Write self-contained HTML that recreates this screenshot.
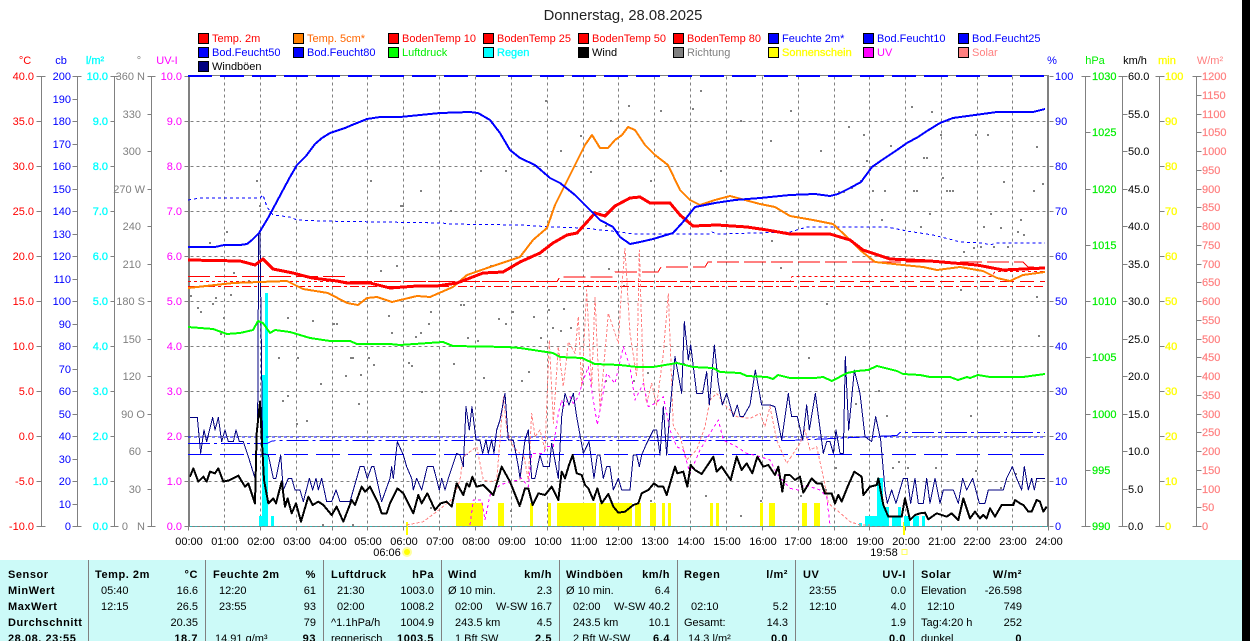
<!DOCTYPE html>
<html lang="de"><head><meta charset="utf-8"><title>Donnerstag, 28.08.2025</title>
<style>
html,body{margin:0;padding:0;background:#fff;overflow:hidden}
svg{display:block;font-family:"Liberation Sans",sans-serif;font-size:11px}
.b{font-weight:bold;letter-spacing:.55px}
.e{text-anchor:end}
.m{text-anchor:middle}
polyline,.ln{fill:none;shape-rendering:crispEdges;stroke-linejoin:round}
.nz{vector-effect:non-scaling-stroke}
</style></head><body>
<svg width="1250" height="641" viewBox="0 0 1250 641" xmlns="http://www.w3.org/2000/svg">
<rect width="1250" height="641" fill="#fff"/>
<rect x="1242" y="0" width="8" height="641" fill="#000"/>

<text x="623" y="20" class="m" font-size="14.8" fill="#222">Donnerstag, 28.08.2025</text>

<!-- legend -->
<g stroke="#000" stroke-width="1" shape-rendering="crispEdges">
<rect x="198.5" y="33.5" width="10" height="10" fill="#f00"/><rect x="293.5" y="33.5" width="10" height="10" fill="#ff8000"/><rect x="388.5" y="33.5" width="10" height="10" fill="#f00"/><rect x="483.5" y="33.5" width="10" height="10" fill="#f00"/><rect x="578.5" y="33.5" width="10" height="10" fill="#f00"/><rect x="673.5" y="33.5" width="10" height="10" fill="#f00"/><rect x="768.5" y="33.5" width="10" height="10" fill="#00f"/><rect x="863.5" y="33.5" width="10" height="10" fill="#00f"/><rect x="958.5" y="33.5" width="10" height="10" fill="#00f"/>
<rect x="198.5" y="47.5" width="10" height="10" fill="#00f"/><rect x="293.5" y="47.5" width="10" height="10" fill="#00f"/><rect x="388.5" y="47.5" width="10" height="10" fill="#0f0"/><rect x="483.5" y="47.5" width="10" height="10" fill="#0ff"/><rect x="578.5" y="47.5" width="10" height="10" fill="#000"/><rect x="673.5" y="47.5" width="10" height="10" fill="#808080"/><rect x="768.5" y="47.5" width="10" height="10" fill="#ff0"/><rect x="863.5" y="47.5" width="10" height="10" fill="#f0f"/><rect x="958.5" y="47.5" width="10" height="10" fill="#ff8080"/>
<rect x="198.5" y="61.5" width="10" height="10" fill="#000080"/>
</g>
<g>
<text x="212" y="42" fill="#f00">Temp. 2m</text><text x="307" y="42" fill="#f60">Temp. 5cm*</text><text x="402" y="42" fill="#f00">BodenTemp 10</text><text x="497" y="42" fill="#f00">BodenTemp 25</text><text x="592" y="42" fill="#f00">BodenTemp 50</text><text x="687" y="42" fill="#f00">BodenTemp 80</text><text x="782" y="42" fill="#00f">Feuchte 2m*</text><text x="877" y="42" fill="#00f">Bod.Feucht10</text><text x="972" y="42" fill="#00f">Bod.Feucht25</text>
<text x="212" y="56" fill="#00f">Bod.Feucht50</text><text x="307" y="56" fill="#00f">Bod.Feucht80</text><text x="402" y="56" fill="#0e0">Luftdruck</text><text x="497" y="56" fill="#0ff" stroke="#0ff" stroke-width=".3">Regen</text><text x="592" y="56" fill="#000">Wind</text><text x="687" y="56" fill="#808080">Richtung</text><text x="782" y="56" fill="#ff0" stroke="#ff0" stroke-width=".3">Sonnenschein</text><text x="877" y="56" fill="#f0f">UV</text><text x="972" y="56" fill="#ff8080">Solar</text>
<text x="212" y="70" fill="#000">Windböen</text>
</g>

<!-- axis headings -->
<text x="25" y="64" class="m" fill="#f00">°C</text><text x="61" y="64" class="m" fill="#00f">cb</text><text x="95" y="64" class="m" fill="#0ff" stroke="#0ff" stroke-width=".3">l/m²</text><text x="139" y="64" class="m" fill="#808080">°</text><text x="167" y="64" class="m" fill="#f0f">UV-I</text>
<text x="1052" y="64" class="m" fill="#00f">%</text><text x="1095" y="64" class="m" fill="#0e0">hPa</text><text x="1135" y="64" class="m" fill="#000">km/h</text><text x="1167" y="64" class="m" fill="#ff0" stroke="#ff0" stroke-width=".3">min</text><text x="1210" y="64" class="m" fill="#ff8080">W/m²</text>

<!-- axes -->
<g transform="translate(.5,.5)" stroke="#808080" fill="none" shape-rendering="crispEdges">
<path d="M41 76V526M36 76h9M36 121h5M36 166h5M36 211h5M36 256h5M36 301h5M36 346h5M36 391h5M36 436h5M36 481h5M36 526h9"/>
<path d="M77 76V526M72 76h9M72 99h5M72 121h5M72 144h5M72 166h5M72 189h5M72 211h5M72 234h5M72 256h5M72 279h5M72 301h5M72 324h5M72 346h5M72 369h5M72 391h5M72 414h5M72 436h5M72 459h5M72 481h5M72 504h5M72 526h9"/>
<path d="M114 76V526M110 76h8M110 121h4M110 166h4M110 211h4M110 256h4M110 301h4M110 346h4M110 391h4M110 436h4M110 481h4M110 526h8"/>
<path d="M151 76V526M147 76h8M147 114h4M147 151h4M147 189h4M147 226h4M147 264h4M147 301h4M147 339h4M147 376h4M147 414h4M147 451h4M147 489h4M147 526h8"/>
<path d="M184 76h4M184 121h4M184 166h4M184 211h4M184 256h4M184 301h4M184 346h4M184 391h4M184 436h4M184 481h4M184 526h4"/>
<path d="M1049 76h4M1049 121h4M1049 166h4M1049 211h4M1049 256h4M1049 301h4M1049 346h4M1049 391h4M1049 436h4M1049 481h4M1049 526h4"/>
<path d="M1085 76V526M1081 76h9M1085 132h5M1085 189h5M1085 245h5M1085 301h5M1085 357h5M1085 414h5M1085 470h5M1081 526h9"/>
<path d="M1122 76V526M1118 76h9M1122 114h5M1122 151h5M1122 189h5M1122 226h5M1122 264h5M1122 301h5M1122 339h5M1122 376h5M1122 414h5M1122 451h5M1122 489h5M1118 526h9"/>
<path d="M1159 76V526M1155 76h9M1159 121h5M1159 166h5M1159 211h5M1159 256h5M1159 301h5M1159 346h5M1159 391h5M1159 436h5M1159 481h5M1155 526h9"/>
<path d="M1196 76V526M1192 76h9M1196 95h5M1196 114h5M1196 132h5M1196 151h5M1196 170h5M1196 189h5M1196 207h5M1196 226h5M1196 245h5M1196 264h5M1196 282h5M1196 301h5M1196 320h5M1196 339h5M1196 357h5M1196 376h5M1196 395h5M1196 414h5M1196 432h5M1196 451h5M1196 470h5M1196 489h5M1196 507h5M1192 526h9"/>
</g>

<!-- axis labels -->
<g class="e" fill="#f00" text-anchor="end"><text x="34" y="80">40.0</text><text x="34" y="125">35.0</text><text x="34" y="170">30.0</text><text x="34" y="215">25.0</text><text x="34" y="260">20.0</text><text x="34" y="305">15.0</text><text x="34" y="350">10.0</text><text x="34" y="395">5.0</text><text x="34" y="440">0.0</text><text x="34" y="485">-5.0</text><text x="34" y="530">-10.0</text></g>
<g fill="#00f" text-anchor="end"><text x="71" y="80">200</text><text x="71" y="103">190</text><text x="71" y="125">180</text><text x="71" y="148">170</text><text x="71" y="170">160</text><text x="71" y="193">150</text><text x="71" y="215">140</text><text x="71" y="238">130</text><text x="71" y="260">120</text><text x="71" y="283">110</text><text x="71" y="305">100</text><text x="71" y="328">90</text><text x="71" y="350">80</text><text x="71" y="373">70</text><text x="71" y="395">60</text><text x="71" y="418">50</text><text x="71" y="440">40</text><text x="71" y="463">30</text><text x="71" y="485">20</text><text x="71" y="508">10</text><text x="71" y="530">0</text></g>
<g fill="#0ff" stroke="#0ff" stroke-width=".3" text-anchor="end"><text x="108" y="80">10.0</text><text x="108" y="125">9.0</text><text x="108" y="170">8.0</text><text x="108" y="215">7.0</text><text x="108" y="260">6.0</text><text x="108" y="305">5.0</text><text x="108" y="350">4.0</text><text x="108" y="395">3.0</text><text x="108" y="440">2.0</text><text x="108" y="485">1.0</text><text x="108" y="530">0.0</text></g>
<g fill="#808080" text-anchor="end"><text x="145" y="80">360 N</text><text x="141" y="118">330</text><text x="141" y="155">300</text><text x="145" y="193">270 W</text><text x="141" y="230">240</text><text x="141" y="268">210</text><text x="145" y="305">180 S</text><text x="141" y="343">150</text><text x="141" y="380">120</text><text x="145" y="418">90 O</text><text x="141" y="455">60</text><text x="141" y="493">30</text><text x="128" y="530">0</text><text x="145" y="530">N</text></g>
<g fill="#f0f" text-anchor="end"><text x="182" y="80">10.0</text><text x="182" y="125">9.0</text><text x="182" y="170">8.0</text><text x="182" y="215">7.0</text><text x="182" y="260">6.0</text><text x="182" y="305">5.0</text><text x="182" y="350">4.0</text><text x="182" y="395">3.0</text><text x="182" y="440">2.0</text><text x="182" y="485">1.0</text><text x="182" y="530">0.0</text></g>
<g fill="#00f"><text x="1055" y="80">100</text><text x="1055" y="125">90</text><text x="1055" y="170">80</text><text x="1055" y="215">70</text><text x="1055" y="260">60</text><text x="1055" y="305">50</text><text x="1055" y="350">40</text><text x="1055" y="395">30</text><text x="1055" y="440">20</text><text x="1055" y="485">10</text><text x="1055" y="530">0</text></g>
<g fill="#0e0" stroke="#0e0" stroke-width=".2"><text x="1092" y="80">1030</text><text x="1092" y="136">1025</text><text x="1092" y="193">1020</text><text x="1092" y="249">1015</text><text x="1092" y="305">1010</text><text x="1092" y="361">1005</text><text x="1092" y="418">1000</text><text x="1092" y="474">995</text><text x="1092" y="530">990</text></g>
<g fill="#000"><text x="1128" y="80">60.0</text><text x="1128" y="118">55.0</text><text x="1128" y="155">50.0</text><text x="1128" y="193">45.0</text><text x="1128" y="230">40.0</text><text x="1128" y="268">35.0</text><text x="1128" y="305">30.0</text><text x="1128" y="343">25.0</text><text x="1128" y="380">20.0</text><text x="1128" y="418">15.0</text><text x="1128" y="455">10.0</text><text x="1128" y="493">5.0</text><text x="1128" y="530">0.0</text></g>
<g fill="#ff0" stroke="#ff0" stroke-width=".3"><text x="1165" y="80">100</text><text x="1165" y="125">90</text><text x="1165" y="170">80</text><text x="1165" y="215">70</text><text x="1165" y="260">60</text><text x="1165" y="305">50</text><text x="1165" y="350">40</text><text x="1165" y="395">30</text><text x="1165" y="440">20</text><text x="1165" y="485">10</text><text x="1165" y="530">0</text></g>
<g fill="#ff8080" stroke="#ff8080" stroke-width=".2"><text x="1202" y="80">1200</text><text x="1202" y="99">1150</text><text x="1202" y="118">1100</text><text x="1202" y="136">1050</text><text x="1202" y="155">1000</text><text x="1202" y="174">950</text><text x="1202" y="193">900</text><text x="1202" y="211">850</text><text x="1202" y="230">800</text><text x="1202" y="249">750</text><text x="1202" y="268">700</text><text x="1202" y="286">650</text><text x="1202" y="305">600</text><text x="1202" y="324">550</text><text x="1202" y="343">500</text><text x="1202" y="361">450</text><text x="1202" y="380">400</text><text x="1202" y="399">350</text><text x="1202" y="418">300</text><text x="1202" y="436">250</text><text x="1202" y="455">200</text><text x="1202" y="474">150</text><text x="1202" y="493">100</text><text x="1202" y="511">50</text><text x="1202" y="530">0</text></g>

<!-- grid -->
<g transform="translate(.5,.5)" stroke="#808080" fill="none" shape-rendering="crispEdges">
<path stroke-dasharray="3 3" d="M190 121H1047M190 166H1047M190 211H1047M190 256H1047M190 301H1047M190 346H1047M190 391H1047M190 436H1047M190 481H1047"/>
<path stroke-dasharray="3 3" d="M224 76V526M260 76V526M296 76V526M332 76V526M367 76V526M403 76V526M439 76V526M475 76V526M511 76V526M547 76V526M583 76V526M618 76V526M654 76V526M690 76V526M726 76V526M762 76V526M798 76V526M834 76V526M869 76V526M905 76V526M941 76V526M977 76V526M1012 76V526"/>
<path d="M188 75H1048M188 526H1048"/>
<path d="M188 526v4M224 526v4M260 526v4M296 526v4M332 526v4M367 526v4M403 526v4M439 526v4M475 526v4M511 526v4M547 526v4M583 526v4M618 526v4M654 526v4M690 526v4M726 526v4M762 526v4M798 526v4M834 526v4M869 526v4M905 526v4M941 526v4M977 526v4M1012 526v4M1048 526v4"/>
</g>
<rect x="188" y="75" width="2" height="452" fill="#808080"/>
<rect x="1047" y="75" width="2" height="452" fill="#808080"/>

<!-- scatter (Richtung) -->
<g fill="#808080" shape-rendering="crispEdges">
<path d="M226 231h2v2h-2zM209 242h2v2h-2zM233 272h2v2h-2zM248 280h2v2h-2zM230 294h2v2h-2zM215 297h2v2h-2zM190 295h2v2h-2zM197 307h2v2h-2zM200 311h2v2h-2zM212 303h2v2h-2zM223 317h2v2h-2zM220 333h2v2h-2zM312 320h2v2h-2zM333 323h2v2h-2zM336 323h2v2h-2zM287 317h2v2h-2zM396 265h2v2h-2zM380 270h2v2h-2zM490 265h2v2h-2zM388 315h2v2h-2zM430 311h2v2h-2zM391 332h2v2h-2zM415 336h2v2h-2zM420 332h2v2h-2zM428 323h2v2h-2zM467 337h2v2h-2zM477 340h2v2h-2zM463 304h2v2h-2zM460 304h2v2h-2zM498 318h2v2h-2zM505 323h2v2h-2zM512 311h2v2h-2zM278 357h2v2h-2zM297 357h2v2h-2zM350 357h2v2h-2zM352 357h2v2h-2zM320 383h2v2h-2zM345 375h2v2h-2zM360 374h2v2h-2zM373 364h2v2h-2zM368 357h2v2h-2zM408 362h2v2h-2zM411 365h2v2h-2zM453 363h2v2h-2zM483 377h2v2h-2zM282 400h2v2h-2zM287 395h2v2h-2zM306 420h2v2h-2zM296 423h2v2h-2zM358 403h2v2h-2zM421 391h2v2h-2zM605 225h2v2h-2zM771 240h2v2h-2zM780 267h2v2h-2zM608 268h2v2h-2zM587 285h2v2h-2zM623 285h2v2h-2zM563 308h2v2h-2zM548 309h2v2h-2zM533 316h2v2h-2zM552 327h2v2h-2zM560 330h2v2h-2zM570 327h2v2h-2zM540 337h2v2h-2zM528 371h2v2h-2zM521 380h2v2h-2zM605 380h2v2h-2zM647 372h2v2h-2zM633 380h2v2h-2zM683 363h2v2h-2zM826 303h2v2h-2zM920 226h2v2h-2zM983 226h2v2h-2zM1000 227h2v2h-2zM1017 231h2v2h-2zM1023 234h2v2h-2zM963 251h2v2h-2zM973 247h2v2h-2zM980 246h2v2h-2zM993 246h2v2h-2zM1007 246h2v2h-2zM960 289h2v2h-2zM1036 296h2v2h-2zM1038 335h2v2h-2zM808 357h2v2h-2zM886 415h2v2h-2zM970 415h2v2h-2zM898 461h2v2h-2zM892 467h2v2h-2zM935 467h2v2h-2zM907 467h2v2h-2zM835 467h2v2h-2zM878 390h2v2h-2zM855 403h2v2h-2zM845 436h2v2h-2zM911 106h2v2h-2zM931 111h2v2h-2zM848 126h2v2h-2zM863 134h2v2h-2zM940 134h2v2h-2zM975 134h2v2h-2zM987 134h2v2h-2zM890 145h2v2h-2zM923 157h2v2h-2zM926 157h2v2h-2zM866 160h2v2h-2zM860 180h2v2h-2zM942 177h2v2h-2zM1003 181h2v2h-2zM1042 183h2v2h-2zM1033 190h2v2h-2zM872 190h2v2h-2zM884 190h2v2h-2zM913 190h2v2h-2zM916 190h2v2h-2zM946 190h2v2h-2zM949 190h2v2h-2zM952 190h2v2h-2zM838 191h2v2h-2zM843 191h2v2h-2zM851 187h2v2h-2zM929 213h2v2h-2zM990 213h2v2h-2zM881 219h2v2h-2zM1020 219h2v2h-2zM1036 146h2v2h-2zM692 108h2v2h-2zM770 140h2v2h-2zM628 105h2v2h-2zM700 90h2v2h-2zM660 110h2v2h-2zM580 135h2v2h-2zM610 120h2v2h-2zM505 170h2v2h-2zM560 150h2v2h-2zM450 210h2v2h-2zM420 190h2v2h-2zM370 180h2v2h-2zM545 100h2v2h-2zM740 120h2v2h-2zM790 110h2v2h-2zM820 150h2v2h-2zM720 170h2v2h-2zM650 180h2v2h-2zM256 180h2v2h-2zM259 205h2v2h-2zM590 171h2v2h-2zM400 205h2v2h-2zM402 205h2v2h-2zM480 170h2v2h-2zM740 515h2v2h-2zM760 500h2v2h-2zM800 495h2v2h-2zM825 489h2v2h-2zM705 495h2v2h-2zM650 500h2v2h-2zM630 505h2v2h-2zM600 507h2v2h-2zM547 505h2v2h-2zM510 510h2v2h-2zM430 507h2v2h-2zM352 524h2v2h-2zM322 524h2v2h-2zM1000 487h2v2h-2zM1015 473h2v2h-2zM975 470h2v2h-2z"/>
</g>

<!-- sunshine -->
<g fill="#ff0">
<rect x="456" y="503" width="27" height="23"/><rect x="498" y="503" width="6" height="23"/><rect x="530" y="503" width="3" height="23"/><rect x="548" y="503" width="3" height="23"/><rect x="557" y="503" width="39" height="23"/><rect x="599" y="503" width="33" height="23"/><rect x="635" y="503" width="6" height="23"/><rect x="650" y="503" width="6" height="23"/><rect x="662" y="503" width="3" height="23"/><rect x="668" y="503" width="3" height="23"/><rect x="710" y="503" width="3" height="23"/><rect x="716" y="503" width="3" height="23"/><rect x="760" y="503" width="3" height="23"/><rect x="769" y="503" width="6" height="23"/><rect x="802" y="503" width="5" height="23"/><rect x="814" y="503" width="6" height="23"/>
<rect x="406" y="522" width="2" height="13"/><rect x="903" y="522" width="2" height="13"/>
</g>
<!-- rain -->
<g fill="#0ff">
<rect x="259" y="516" width="3" height="10"/><rect x="262" y="375" width="3" height="151"/><rect x="265" y="293" width="3" height="233"/><rect x="271" y="516" width="3" height="10"/>
<rect x="859" y="523" width="3" height="3"/><rect x="865" y="516" width="12" height="10"/><rect x="877" y="478" width="6" height="48"/><rect x="883" y="507" width="6" height="19"/><rect x="892" y="516" width="6" height="10"/><rect x="898" y="507" width="3" height="19"/><rect x="904" y="516" width="6" height="10"/><rect x="913" y="516" width="6" height="10"/><rect x="922" y="516" width="3" height="10"/>
</g>
<path d="M190 526.5H1047" stroke="#2fb5b5" stroke-width="1" stroke-dasharray="2 3" fill="none" shape-rendering="crispEdges"/>

<!-- boden temps & boden feuchte -->
<g class="ln" stroke="#f00" stroke-width="1">
<path class="ln" stroke-dasharray="22 5" d="M188 276.5H350M350 281.5H557L560 277H612L615 272H658L661 267H705L708 262H1023L1028 267H1045"/>
<path class="ln" stroke-dasharray="3 3" d="M188 281.5H790L792 276.5H992L995 271.5H1045"/>
<path class="ln" stroke-dasharray="14 6" d="M520 281.5H1045"/>
<path class="ln" stroke-dasharray="9 3 3 3" d="M188 286.5H1045"/>
</g>
<g class="ln" stroke="#00f" stroke-width="1">
<polyline stroke-dasharray="3 3" points="188,200 200,198 260,198 263,195 267,207 273,215 290,217 297,220 320,221 443,223 447,224 520,225 553,227 583,228 620,232 633,234 710,234 712,232 717,234 790,232 807,227 887,227 907,231 933,235 953,240 960,242 983,243 990,245 997,243 1045,243"/>
<path class="ln" stroke-dasharray="3 3" d="M188 437H1045"/>
<path class="ln" stroke-dasharray="22 4 3 4" d="M188 443.5H267L272 441L277 440.5H790L897 435.5L900 432.5H1045"/>
<path class="ln" stroke-dasharray="24 8" d="M188 454.5H1045"/>
</g>
<path class="ln" stroke="#00f" stroke-width="2" stroke-dasharray="24 8" d="M188 76H1047"/>

<!-- solar / uv / windböen / wind in zoom-coordinates -->
<g transform="translate(190,220) scale(.33333)" fill="none">
<polyline class="nz" stroke="#ff8080" stroke-width="1" stroke-dasharray="3 2" points="650,915 700,905 740,875 790,835 810,780 820,710 860,680 880,780 900,785 920,780 930,660 940,530 950,630 970,680 990,700"/>
<polyline class="nz" stroke="#f0f" stroke-width="1" stroke-dasharray="3 3" points="840,915 850,840 875,840 885,900 900,825 930,795 960,785 985,780"/>
</g>
<g transform="translate(520,220) scale(.33333)" fill="none">
<polyline class="nz" stroke="#ff8080" stroke-width="1" stroke-dasharray="3 2" points="0,780 10,700 25,780 35,580 45,650 60,630 75,690 88,360 100,610 115,380 130,500 145,365 165,400 175,290 185,500 200,210 215,500 225,230 240,570 265,280 285,340 295,370 305,200 315,85 330,340 350,470 358,90 370,480 380,550 395,490 410,555 430,400 445,220 460,620 480,650 500,720 530,690 555,620 570,540 590,520 620,560 650,590 690,595 720,580 735,620 750,560 770,660 800,730 810,715"/>
<polyline class="nz" stroke="#f0f" stroke-width="1" stroke-dasharray="3 3" points="0,770 25,800 35,700 60,700 70,700 80,680 100,680 115,580 125,540 130,560 150,530 160,550 175,530 190,480 205,440 215,510 232,615 260,460 285,490 310,380 330,440 345,540 370,490 385,560 405,550 430,530 450,630 470,680 490,690 510,760 540,690 570,640 595,600 610,660 650,680 680,700 720,710 750,720 770,760 810,805"/>
</g>
<g transform="translate(790,220) scale(.33333)" fill="none">
<polyline class="nz" stroke="#ff8080" stroke-width="1" stroke-dasharray="3 2" points="0,715 30,670 45,630 60,690 80,680 100,770 115,850 140,870 180,905 210,915 240,915"/>
<polyline class="nz" stroke="#f0f" stroke-width="1" stroke-dasharray="3 3" points="0,805 25,810 45,795 90,810 110,830 120,915"/>
</g>
<g transform="translate(190,220) scale(.33333)" fill="none">
<polyline class="nz" stroke="#000080" stroke-width="1" points="0,592 22,592 32,700 42,630 50,665 68,592 75,630 85,592 95,665 105,630 115,665 130,665 138,630 148,665 160,665 175,710 195,775 203,600 206,40 210,40 215,460 218,700 235,705 250,775 258,775 272,705 280,810 295,775 305,775 315,810 330,810 340,845 358,775 368,810 378,775 385,810 395,775 410,845 425,845 438,810 450,845 480,845 510,740 522,740 532,775 545,740 552,740 575,845 600,775 605,740 610,775 622,665 640,705 650,740 665,775 670,810 680,775 695,810 712,740 730,740 748,810 755,775 765,810 775,775 800,700 810,705 820,740 828,560 838,630 846,560 858,660 870,660 878,700 888,660 895,700 905,660 912,700 920,630 930,600 945,520 955,660 970,660 985,740 990,775"/>
<polyline class="nz" stroke="#000" stroke-width="2" points="0,770 10,745 25,785 40,770 50,785 60,755 75,760 85,745 100,785 120,780 145,767 165,800 175,790 195,850 200,640 210,545 215,650 222,780 235,850 250,835 258,850 275,785 285,860 293,835 305,880 318,850 333,905 355,830 368,855 385,845 400,855 425,885 440,860 460,905 485,840 495,855 515,800 525,815 540,800 565,850 575,880 590,880 600,850 622,805 640,820 670,880 685,825 695,850 712,820 735,870 752,850 770,845 785,860 800,790 820,825 830,790 838,800 847,770 860,800 880,795 890,805 910,825 935,740 960,785 990,860"/>
</g>
<g transform="translate(520,220) scale(.33333)" fill="none">
<polyline class="nz" stroke="#000080" stroke-width="1" points="0,775 15,660 25,630 35,775 45,775 60,705 70,740 88,740 95,670 115,775 125,590 135,520 147,555 160,520 170,590 190,700 207,665 222,775 232,705 240,705 250,775 260,740 270,740 280,810 295,775 305,810 330,810 340,705 350,705 358,740 365,705 380,670 400,630 410,630 420,705 430,560 440,705 450,570 465,410 485,520 493,305 505,420 512,375 530,520 548,520 560,455 568,555 583,375 595,490 607,555 620,520 640,590 652,555 660,590 670,590 690,555 706,450 725,555 750,555 765,560 785,660 805,520 810,560"/>
<polyline class="nz" stroke="#000" stroke-width="2" points="0,855 15,805 25,805 38,855 55,820 75,825 95,800 115,840 125,755 135,775 147,735 158,705 170,760 185,765 195,795 205,805 220,840 232,805 245,850 265,822 280,860 295,878 315,875 340,855 355,850 365,820 385,810 402,790 415,800 430,800 440,825 465,740 472,760 490,755 502,800 512,735 525,750 545,762 580,710 590,755 605,740 632,780 650,710 665,750 680,730 697,760 712,710 730,740 745,735 765,765 775,740 787,815 795,765 810,765"/>
</g>
<g transform="translate(790,220) scale(.33333)" fill="none">
<polyline class="nz" stroke="#000080" stroke-width="1" points="0,560 5,590 22,590 38,660 50,555 58,630 76,520 100,700 110,665 120,665 130,700 138,630 150,700 160,700 166,410 176,630 193,450 210,520 225,650 245,665 257,590 272,660 285,810 292,850 305,810 318,850 340,775 352,775 362,850 375,775 385,850 400,850 410,775 420,850 435,775 450,850 460,810 490,810 505,850 518,775 530,810 548,775 568,850 585,850 595,810 640,810 650,775 667,740 680,775 695,810 703,740 715,810 725,775 733,810 740,775 765,775"/>
<polyline class="nz" stroke="#000" stroke-width="2" points="0,765 15,780 30,770 40,818 65,775 80,790 95,790 105,820 125,820 135,850 145,825 155,845 175,795 193,755 215,770 220,825 240,800 260,795 265,775 280,855 295,890 315,890 335,890 345,835 360,900 375,885 390,880 405,878 415,898 440,880 470,890 485,880 505,900 520,835 540,895 555,875 570,895 580,885 590,895 600,865 615,890 635,855 670,855 675,840 690,850 700,855 715,875 725,875 740,840 750,845 760,875 770,860"/>
</g>

<!-- main curves -->
<polyline stroke="#0f0" stroke-width="2" points="188,327 213,329 227,334 240,333 253,330 258,321 263,323 270,333 275,330 290,332 310,338 330,341 350,341 357,344 390,344 400,345 443,342 453,346 507,347 520,348 553,353 560,357 582,358 595,364 620,365 637,367 653,367 677,363 693,367 713,368 720,372 740,373 747,376 767,377 773,379 778,375 790,378 815,378 823,377 832,381 847,373 857,371 868,370 877,366 897,371 903,374 920,375 930,377 950,377 958,380 967,377 970,378 978,375 990,377 1023,377 1045,374"/>
<polyline stroke="#ff8000" stroke-width="2" points="188,288 233,283 287,281 303,289 328,293 347,303 358,305 367,298 377,297 392,302 417,296 430,297 453,287 467,275 490,267 520,257 533,240 547,228 555,205 565,185 575,165 585,145 592,135 600,148 608,148 615,140 622,135 628,127 635,130 645,145 655,155 668,165 680,190 690,200 700,205 715,200 730,196 745,200 760,204 775,207 790,216 813,220 833,224 847,237 860,250 875,262 903,265 923,267 937,270 960,267 983,271 997,278 1010,281 1023,275 1045,272"/>
<polyline stroke="#f00" stroke-width="3" points="188,260 240,261 255,265 263,259 273,269 293,273 312,278 337,281 347,283 370,283 390,288 417,286 437,286 457,283 483,273 503,272 520,262 540,253 553,243 567,235 577,233 587,222 595,213 605,216 615,206 630,198 640,197 650,203 670,203 680,215 693,226 717,225 747,227 767,230 790,234 830,234 850,240 863,250 890,259 930,261 977,265 1003,270 1045,268"/>
<polyline stroke="#00f" stroke-width="2" points="188,247 215,247 224,245 240,245 247,244 252,240 259,233 268,218 275,205 283,190 290,177 297,165 306,156 315,144 322,138 330,133 345,128 352,125 367,119 380,117 400,117 420,115 440,113 470,112 478,113 490,120 500,133 510,150 520,158 535,165 550,178 560,183 575,195 590,210 600,220 613,227 620,237 630,244 640,242 653,239 673,233 683,222 695,207 715,203 735,200 760,198 790,195 815,194 830,196 838,194 850,188 861,182 872,167 882,160 897,150 907,143 918,137 927,131 940,123 953,118 975,115 997,112 1033,112 1045,109"/>

<!-- x labels -->
<g fill="#000" text-anchor="middle">
<text x="189" y="545">00:00</text><text x="225" y="545">01:00</text><text x="261" y="545">02:00</text><text x="297" y="545">03:00</text><text x="333" y="545">04:00</text><text x="368" y="545">05:00</text><text x="404" y="545">06:00</text><text x="440" y="545">07:00</text><text x="476" y="545">08:00</text><text x="512" y="545">09:00</text><text x="548" y="545">10:00</text><text x="584" y="545">11:00</text><text x="619" y="545">12:00</text><text x="655" y="545">13:00</text><text x="691" y="545">14:00</text><text x="727" y="545">15:00</text><text x="763" y="545">16:00</text><text x="798" y="545">17:00</text><text x="834" y="545">18:00</text><text x="870" y="545">19:00</text><text x="906" y="545">20:00</text><text x="942" y="545">21:00</text><text x="977" y="545">22:00</text><text x="1013" y="545">23:00</text><text x="1049" y="545">24:00</text>
<text x="387" y="556">06:06</text><text x="884" y="556">19:58</text>
</g>
<circle cx="407" cy="552" r="5" fill="#ffffa0"/><circle cx="407" cy="552" r="3" fill="#ff0"/>
<rect x="902" y="549.5" width="5" height="5" fill="none" stroke="#ffff60"/>

<!-- panel -->
<rect x="0" y="560" width="1242" height="81" fill="#ccfaf8"/>
<g fill="#808080" shape-rendering="crispEdges">
<rect x="88" y="560" width="1" height="81"/><rect x="205" y="560" width="1" height="81"/><rect x="323" y="560" width="1" height="81"/><rect x="441" y="560" width="1" height="81"/><rect x="559" y="560" width="1" height="81"/><rect x="677" y="560" width="1" height="81"/><rect x="795" y="560" width="1" height="81"/><rect x="913" y="560" width="1" height="81"/>
</g>
<g fill="#000">
<text x="8" y="578" class="b">Sensor</text><text x="8" y="594" class="b">MinWert</text><text x="8" y="610" class="b">MaxWert</text><text x="8" y="626" class="b">Durchschnitt</text><text x="8" y="642" class="b">28.08. 23:55</text>

<text x="95" y="578" class="b">Temp. 2m</text><text x="198" y="578" class="b" text-anchor="end">°C</text>
<text x="101" y="594">05:40</text><text x="198" y="594" text-anchor="end">16.6</text>
<text x="101" y="610">12:15</text><text x="198" y="610" text-anchor="end">26.5</text>
<text x="198" y="626" text-anchor="end">20.35</text>
<text x="198" y="642" class="b" text-anchor="end">18.7</text>

<text x="213" y="578" class="b">Feuchte 2m</text><text x="316" y="578" class="b" text-anchor="end">%</text>
<text x="219" y="594">12:20</text><text x="316" y="594" text-anchor="end">61</text>
<text x="219" y="610">23:55</text><text x="316" y="610" text-anchor="end">93</text>
<text x="316" y="626" text-anchor="end">79</text>
<text x="215" y="642">14.91 g/m³</text><text x="316" y="642" class="b" text-anchor="end">93</text>

<text x="331" y="578" class="b">Luftdruck</text><text x="434" y="578" class="b" text-anchor="end">hPa</text>
<text x="337" y="594">21:30</text><text x="434" y="594" text-anchor="end">1003.0</text>
<text x="337" y="610">02:00</text><text x="434" y="610" text-anchor="end">1008.2</text>
<text x="331" y="626">^1.1hPa/h</text><text x="434" y="626" text-anchor="end">1004.9</text>
<text x="331" y="642">regnerisch</text><text x="434" y="642" class="b" text-anchor="end">1003.5</text>

<text x="448" y="578" class="b">Wind</text><text x="552" y="578" class="b" text-anchor="end">km/h</text>
<text x="448" y="594">Ø 10 min.</text><text x="552" y="594" text-anchor="end">2.3</text>
<text x="455" y="610">02:00</text><text x="552" y="610" text-anchor="end">W-SW 16.7</text>
<text x="455" y="626">243.5 km</text><text x="552" y="626" text-anchor="end">4.5</text>
<text x="455" y="642">1 Bft SW</text><text x="552" y="642" class="b" text-anchor="end">2.5</text>

<text x="566" y="578" class="b">Windböen</text><text x="670" y="578" class="b" text-anchor="end">km/h</text>
<text x="566" y="594">Ø 10 min.</text><text x="670" y="594" text-anchor="end">6.4</text>
<text x="573" y="610">02:00</text><text x="670" y="610" text-anchor="end">W-SW 40.2</text>
<text x="573" y="626">243.5 km</text><text x="670" y="626" text-anchor="end">10.1</text>
<text x="573" y="642">2 Bft W-SW</text><text x="670" y="642" class="b" text-anchor="end">6.4</text>

<text x="684" y="578" class="b">Regen</text><text x="788" y="578" class="b" text-anchor="end">l/m²</text>
<text x="691" y="610">02:10</text><text x="788" y="610" text-anchor="end">5.2</text>
<text x="684" y="626">Gesamt:</text><text x="788" y="626" text-anchor="end">14.3</text>
<text x="688" y="642">14.3 l/m²</text><text x="788" y="642" class="b" text-anchor="end">0.0</text>

<text x="803" y="578" class="b">UV</text><text x="906" y="578" class="b" text-anchor="end">UV-I</text>
<text x="809" y="594">23:55</text><text x="906" y="594" text-anchor="end">0.0</text>
<text x="809" y="610">12:10</text><text x="906" y="610" text-anchor="end">4.0</text>
<text x="906" y="626" text-anchor="end">1.9</text>
<text x="906" y="642" class="b" text-anchor="end">0.0</text>

<text x="921" y="578" class="b">Solar</text><text x="1022" y="578" class="b" text-anchor="end">W/m²</text>
<text x="921" y="594">Elevation</text><text x="1022" y="594" text-anchor="end">-26.598</text>
<text x="927" y="610">12:10</text><text x="1022" y="610" text-anchor="end">749</text>
<text x="921" y="626">Tag:4:20 h</text><text x="1022" y="626" text-anchor="end">252</text>
<text x="921" y="642">dunkel</text><text x="1022" y="642" class="b" text-anchor="end">0</text>
</g>
</svg>
</body></html>
